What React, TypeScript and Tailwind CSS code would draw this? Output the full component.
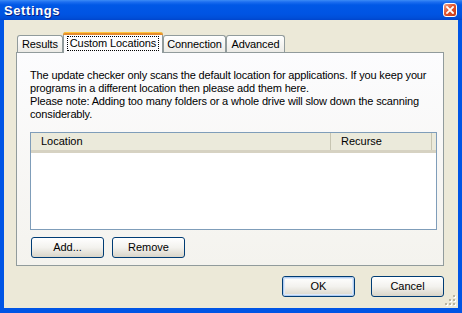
import React from 'react';

const FONT = { fontFamily: '"Liberation Sans", Arial, sans-serif' };

function Tab({ label, selected, width }: { label: string; selected?: boolean; width: number }) {
  if (selected) {
    return (
      <div
        className="relative z-10 -mb-px flex h-[21px] flex-col rounded-t-[3px] border border-b-0 border-[#919B9C] bg-[#FCFCFE]"
        style={{ width }}
      >
        <div className="-mx-px -mt-px h-[3px] rounded-t-[3px] bg-[#E68B2C] border-t border-[#FFC73C]" />
        <div className="flex flex-1 items-center justify-center pb-[1px]">
          <span className="border border-dotted border-black px-[2px] leading-[13px] text-[11px] tracking-[-0.1px] text-black">
            {label}
          </span>
        </div>
      </div>
    );
  }
  return (
    <div
      className="flex h-[17px] items-center justify-center rounded-t-[3px] border border-b-0 border-[#919B9C] bg-gradient-to-b from-white to-[#ECEBE6] text-[11px] tracking-[-0.1px] text-black"
      style={{ width }}
    >
      {label}
    </div>
  );
}

function XpButton({ label, width, isDefault }: { label: string; width: number; isDefault?: boolean }) {
  return (
    <div
      className="flex h-[21px] items-center justify-center rounded-[3px] border border-[#003C74] bg-gradient-to-b from-white via-[#F3F2EE] to-[#D9D5C9] text-[11px] text-black"
      style={{ width }}
    >
      <div
        className={
          isDefault
            ? 'flex h-full w-full items-center justify-center rounded-[2px] border border-[#B0CCF1] shadow-[inset_0_0_0_1px_#DCE8F8]'
            : 'flex h-full w-full items-center justify-center'
        }
      >
        {label}
      </div>
    </div>
  );
}

function ResizeGrip() {
  const dots: [number, number][] = [
    [8, 0],
    [4, 4],
    [8, 4],
    [0, 8],
    [4, 8],
    [8, 8],
  ];
  return (
    <svg width="12" height="12" viewBox="0 0 12 12" className="absolute bottom-[1px] right-[1px]">
      {dots.map(([x, y]) => (
        <g key={`${x}-${y}`}>
          <rect x={x + 1} y={y + 1} width="2" height="2" fill="#FFFFFF" />
          <rect x={x} y={y} width="2" height="2" fill="#B8B4A2" />
        </g>
      ))}
    </svg>
  );
}

export default function App() {
  return (
    <div
      className="flex h-[313px] w-[462px] flex-col overflow-hidden bg-[#0055E5]"
      style={FONT}
    >
      {/* title bar */}
      <div className="relative flex h-[20px] items-center bg-[linear-gradient(to_bottom,#3C8CF6_0%,#1C6EF0_10%,#0058E6_25%,#0054E3_70%,#004ED8_90%,#0045CC_100%)] pl-[4px]">
        <span className="text-[13px] font-bold leading-none tracking-[0.6px] text-white [text-shadow:1px_1px_0_#0A1E80]">
          Settings
        </span>
        <div className="absolute right-[5px] top-[3px] flex h-[14px] w-[14px] items-center justify-center rounded-[3px] border border-white bg-[linear-gradient(135deg,#F0A890_0%,#E2542E_45%,#C63A17_100%)]">
          <svg width="8" height="8" viewBox="0 0 8 8">
            <path d="M1 1 L7 7 M7 1 L1 7" stroke="white" strokeWidth="1.8" strokeLinecap="square" />
          </svg>
        </div>
      </div>

      {/* client */}
      <div className="flex flex-1 px-[4px] pb-[5px]">
        <div className="relative flex flex-1 flex-col bg-[#ECE9D8]">
          {/* tabs */}
          <div className="mt-[12px] flex items-end pl-[13px]">
            <Tab label="Results" width={46} />
            <Tab label="Custom Locations" selected width={100} />
            <Tab label="Connection" width={63} />
            <Tab label="Advanced" width={59} />
          </div>

          {/* panel */}
          <div className="ml-[12px] flex h-[214px] w-[428px] flex-col border border-[#919B9C] bg-gradient-to-b from-[#FCFCFE] to-[#F4F3EE] px-[13px] pt-[16px] pb-[7px]">
            <div className="text-[11px] leading-[13px] tracking-[-0.15px] text-black">
              <div className="whitespace-nowrap">
                The update checker only scans the default location for applications. If you keep your
              </div>
              <div className="whitespace-nowrap">programs in a different location then please add them here.</div>
              <div className="whitespace-nowrap">
                Please note: Adding too many folders or a whole drive will slow down the scanning
              </div>
              <div className="whitespace-nowrap">considerably.</div>
            </div>

            {/* list */}
            <div className="mt-[11px] flex h-[98px] w-[407px] flex-col border border-[#7F9DB9] bg-white">
              <div className="flex h-[20px] border-b-[3px] border-[#D6D2C2] bg-[#EBEADB] text-[11px] text-black">
                <div className="flex w-[300px] items-center border-r border-[#C7C5B2] pl-[10px]">Location</div>
                <div className="flex w-[101px] items-center border-r border-[#C7C5B2] pl-[10px]">Recurse</div>
                <div className="flex-1" />
              </div>
            </div>

            {/* add / remove */}
            <div className="mt-[7px] flex gap-[8px] pl-[1px]">
              <XpButton label="Add..." width={73} />
              <XpButton label="Remove" width={73} />
            </div>
          </div>

          {/* ok / cancel */}
          <div className="mt-[10px] flex w-[440px] justify-end gap-[16px]">
            <XpButton label="OK" width={73} isDefault />
            <XpButton label="Cancel" width={73} />
          </div>

          <ResizeGrip />
        </div>
      </div>
    </div>
  );
}
